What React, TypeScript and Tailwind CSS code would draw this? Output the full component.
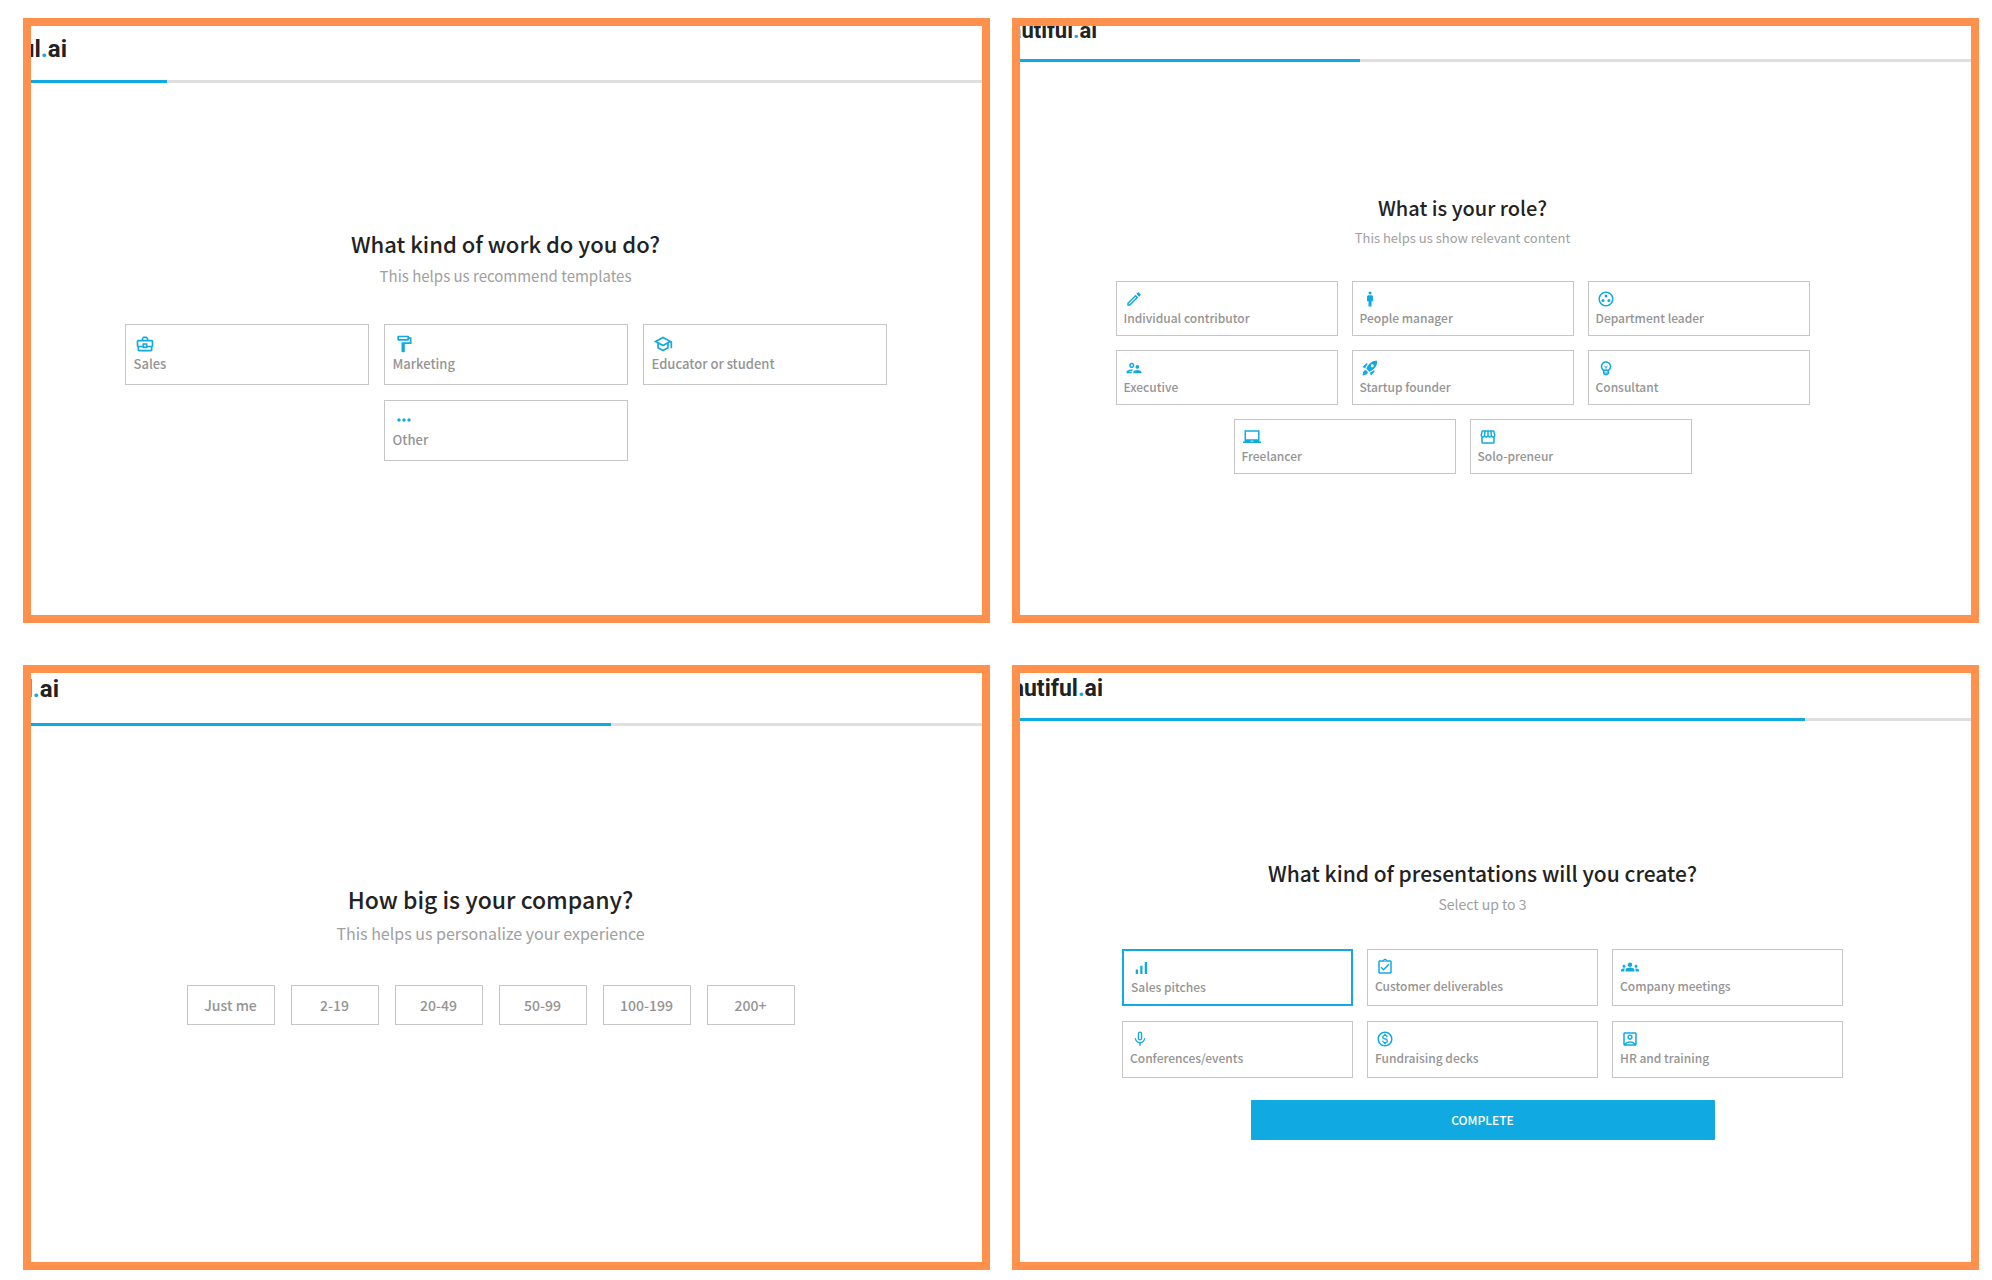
import { useState } from "react";
import type { ReactNode } from "react";
import type { IconType } from "react-icons";
import {
  MdGroups,
  MdMan,
  MdMoreHoriz,
  MdOutlineAccountBox,
  MdOutlineAssignmentTurnedIn,
  MdOutlineBusinessCenter,
  MdOutlineEdit,
  MdOutlineEmojiObjects,
  MdOutlineFormatPaint,
  MdOutlineGroupWork,
  MdOutlineLaptopChromebook,
  MdOutlineMonetizationOn,
  MdOutlineSchool,
  MdOutlineStorefront,
  MdOutlineSupervisorAccount,
  MdRocketLaunch,
  MdSignalCellularAlt,
  MdMicNone,
} from "react-icons/md";

interface Option {
  label: string;
  icon: IconType;
}

// ================= DATA =================
const workOptions: Option[] = [
  { label: "Sales", icon: MdOutlineBusinessCenter },
  { label: "Marketing", icon: MdOutlineFormatPaint },
  { label: "Educator or student", icon: MdOutlineSchool },
  { label: "Other", icon: MdMoreHoriz },
];

const roleOptions: Option[] = [
  { label: "Individual contributor", icon: MdOutlineEdit },
  { label: "People manager", icon: MdMan },
  { label: "Department leader", icon: MdOutlineGroupWork },
  { label: "Executive", icon: MdOutlineSupervisorAccount },
  { label: "Startup founder", icon: MdRocketLaunch },
  { label: "Consultant", icon: MdOutlineEmojiObjects },
  { label: "Freelancer", icon: MdOutlineLaptopChromebook },
  { label: "Solo-preneur", icon: MdOutlineStorefront },
];

const sizeOptions = ["Just me", "2-19", "20-49", "50-99", "100-199", "200+"];

const presentationOptions: Option[] = [
  { label: "Sales pitches", icon: MdSignalCellularAlt },
  { label: "Customer deliverables", icon: MdOutlineAssignmentTurnedIn },
  { label: "Company meetings", icon: MdGroups },
  { label: "Conferences/events", icon: MdMicNone },
  { label: "Fundraising decks", icon: MdOutlineMonetizationOn },
  { label: "HR and training", icon: MdOutlineAccountBox },
];

// ================= PANEL =================
interface PanelProps {
  logoClass: string;
  headerClass: string;
  bodyClass: string;
  progress: number;
  children: ReactNode;
}

function Panel({ logoClass, headerClass, bodyClass, progress, children }: PanelProps) {
  return (
    <section className="flex min-w-0 flex-col overflow-hidden border-8 border-[#ff914d] bg-white">
      <header className={`flex overflow-hidden ${headerClass}`}>
        {/* the logo runs out of the left edge */}
        <div
          className={`flex shrink-0 justify-end font-['Roboto',sans-serif] font-bold text-[#222] ${logoClass}`}
        >
          <span>
            beautiful<span className="text-[#11a9e2]">.</span>ai
          </span>
        </div>
      </header>
      <div
        role="progressbar"
        aria-label="Setup progress"
        aria-valuenow={progress}
        className="h-[3px] bg-[#dfdfdf]"
      >
        <div className="h-full bg-[#11a9e2]" style={{ width: `${progress}%` }} />
      </div>
      <div className={`flex flex-col items-center ${bodyClass}`}>{children}</div>
    </section>
  );
}

// ================= CARD =================
interface CardProps {
  option: Option;
  className: string;
  iconClass: string;
  selected?: boolean;
  onClick: () => void;
}

function Card({ option, className, iconClass, selected, onClick }: CardProps) {
  const Icon = option.icon;
  return (
    <button
      type="button"
      aria-pressed={!!selected}
      onClick={onClick}
      className={`flex flex-col items-start font-medium text-[#949494] ${
        selected ? "border-2 border-[#11a9e2]" : "border border-[#c6c6c6]"
      } ${className}`}
    >
      <Icon className={`text-[#11a9e2] ${iconClass}`} />
      <span>{option.label}</span>
    </button>
  );
}

export default function App() {
  const [work, setWork] = useState("");
  const [role, setRole] = useState("");
  const [size, setSize] = useState("");
  const [picked, setPicked] = useState<string[]>(["Sales pitches"]);

  const togglePicked = (label: string) => {
    setPicked((prev) => {
      if (prev.includes(label)) return prev.filter((p) => p !== label);
      return prev.length < 3 ? [...prev, label] : prev;
    });
  };

  return (
    <main className="grid min-h-screen grid-cols-2 grid-rows-2 gap-x-[22px] gap-y-[42px] bg-white pt-[18px] pr-[13px] pb-[10px] pl-[23px] font-['Noto_Sans_CJK_SC',sans-serif]">
      {/* WORK */}
      <Panel
        progress={14.3}
        headerClass="h-[54px] pt-[7px]"
        logoClass="w-9 text-2xl leading-8"
        bodyClass="pt-[144px] pr-[2px]"
      >
        <h1 className="text-[22px] leading-8 font-medium text-[#222]">What kind of work do you do?</h1>
        <p className="mt-[5px] text-[15px] leading-6 text-[#a0a0a0]">This helps us recommend templates</p>
        <div className="mt-9 flex w-[764px] flex-wrap justify-center gap-[15px]">
          {workOptions.map((o) => (
            <Card
              key={o.label}
              option={o}
              className="h-[61px] w-[244px] px-2 pt-[9px] text-[13px] leading-5"
              iconClass="ml-px h-5 w-5"
              selected={work === o.label}
              onClick={() => setWork(o.label)}
            />
          ))}
        </div>
      </Panel>

      {/* ROLE */}
      <Panel
        progress={35.7}
        headerClass="h-[33px] items-end pb-[14px]"
        logoClass="w-[77px] text-[22px] leading-7"
        bodyClass="pt-[130px] pr-[66px]"
      >
        <h1 className="text-xl leading-8 font-medium text-[#222]">What is your role?</h1>
        <p className="mt-1 text-[13px] leading-5 text-[#a0a0a0]">This helps us show relevant content</p>
        <div className="mt-[33px] flex w-[696px] flex-wrap justify-center gap-[14px]">
          {roleOptions.map((o) => (
            <Card
              key={o.label}
              option={o}
              className="h-[55px] w-[222px] px-[7px] pt-2 text-xs leading-5"
              iconClass="ml-px h-[18px] w-[18px]"
              selected={role === o.label}
              onClick={() => setRole(o.label)}
            />
          ))}
        </div>
      </Panel>

      {/* COMPANY SIZE */}
      <Panel
        progress={61}
        headerClass="h-[50px]"
        logoClass="w-7 text-2xl leading-8"
        bodyClass="pt-[155px] pr-8"
      >
        <h1 className="text-[23px] leading-9 font-medium text-[#222]">How big is your company?</h1>
        <p className="mt-1 text-base leading-6 text-[#a0a0a0]">This helps us personalize your experience</p>
        <div className="mt-10 flex justify-center gap-4">
          {sizeOptions.map((s) => (
            <button
              key={s}
              type="button"
              aria-pressed={size === s}
              onClick={() => setSize(s)}
              className={`h-10 w-[88px] border text-sm font-medium text-[#949494] ${
                size === s ? "border-[#11a9e2]" : "border-[#c6c6c6]"
              }`}
            >
              {s}
            </button>
          ))}
        </div>
      </Panel>

      {/* PRESENTATIONS */}
      <Panel
        progress={82.5}
        headerClass="h-[45px]"
        logoClass="w-[83px] text-[23px] leading-8"
        bodyClass="pt-[136px] pr-[26px]"
      >
        <h1 className="text-[21px] leading-8 font-medium text-[#222]">
          What kind of presentations will you create?
        </h1>
        <p className="mt-[5px] text-sm leading-5 text-[#a0a0a0]">Select up to 3</p>
        <div className="mt-[35px] flex w-[724px] flex-wrap justify-center gap-x-[14px] gap-y-[15px]">
          {presentationOptions.map((o) => (
            <Card
              key={o.label}
              option={o}
              className="h-[57px] w-[231px] px-[7px] pt-2 text-xs leading-5"
              iconClass="ml-px h-[18px] w-[18px]"
              selected={picked.includes(o.label)}
              onClick={() => togglePicked(o.label)}
            />
          ))}
        </div>
        <button
          type="button"
          className="mt-[22px] h-10 w-[464px] rounded-[1px] bg-[#11a9e2] text-xs font-medium text-white"
        >
          COMPLETE
        </button>
      </Panel>
    </main>
  );
}
